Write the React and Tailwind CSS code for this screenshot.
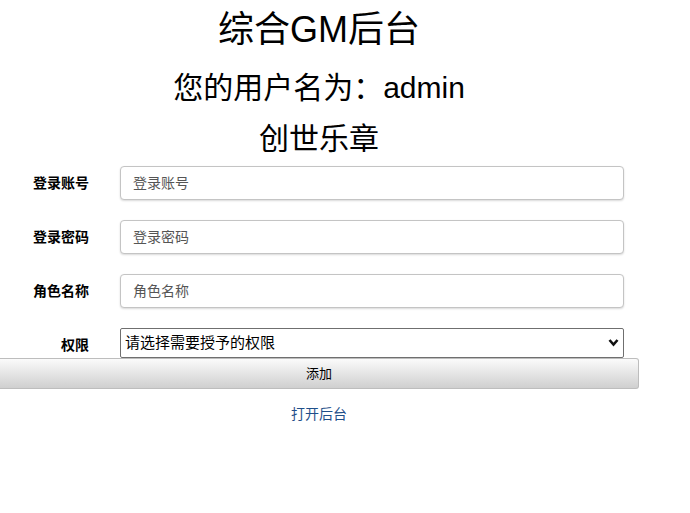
import React from 'react';

const font = { fontFamily: '"Liberation Sans", "Noto Sans CJK SC", sans-serif' };

function Field({ label, placeholder }) {
  return (
    <div className="flex items-center h-[34px]">
      <label className="w-[89px] text-right text-[14px] font-bold text-black">{label}</label>
      <input
        className="ml-[31px] w-[504px] h-[34px] rounded-[4px] border border-[#c4c4c4] bg-white px-[12px] text-[14px] shadow-[0_1px_2px_rgba(0,0,0,0.15)] outline-none placeholder:text-[#555]"
        placeholder={placeholder}
      />
    </div>
  );
}

export default function App() {
  return (
    <div className="min-h-screen bg-white text-black" style={font}>
      <div className="w-[638px]">
        <h1 className="mt-[10px] h-[40px] text-center text-[36px] leading-[40px] font-normal">综合GM后台</h1>
        <h2 className="mt-[18px] h-[40px] text-center text-[30px] leading-[40px] font-normal">您的用户名为：admin</h2>
        <h2 className="mt-[11px] h-[40px] text-center text-[30px] leading-[40px] font-normal">创世乐章</h2>

        <form className="mt-[7px] flex flex-col gap-[20px]">
          <Field label="登录账号" placeholder="登录账号" />
          <Field label="登录密码" placeholder="登录密码" />
          <Field label="角色名称" placeholder="角色名称" />
          <div className="flex items-center h-[30px]">
            <label className="w-[89px] pt-[4px] text-right text-[14px] font-bold">权限</label>
            <div className="relative ml-[31px] w-[504px] h-[30px]">
              <select className="h-full w-full appearance-none rounded-[2px] border border-[#6f6f6f] bg-white pl-[4px] text-[15px] text-black outline-none">
                <option>请选择需要授予的权限</option>
              </select>
              <svg className="pointer-events-none absolute right-[5px] top-[10px]" width="11" height="9" viewBox="0 0 11 9">
                <path d="M1.5 2 L5.5 6.5 L9.5 2" fill="none" stroke="#111" strokeWidth="2.6" />
              </svg>
            </div>
          </div>
        </form>

        <button className="block h-[31px] w-[639px] rounded-r-[3px] border border-l-0 border-[#bdbdbd] bg-gradient-to-b from-[#fbfbfb] to-[#cfcfcf] text-[13px] text-black">
          添加
        </button>

        <div className="mt-[13px] text-center">
          <a href="#" className="text-[14px] text-[#1f4f8a]">打开后台</a>
        </div>
      </div>
    </div>
  );
}
